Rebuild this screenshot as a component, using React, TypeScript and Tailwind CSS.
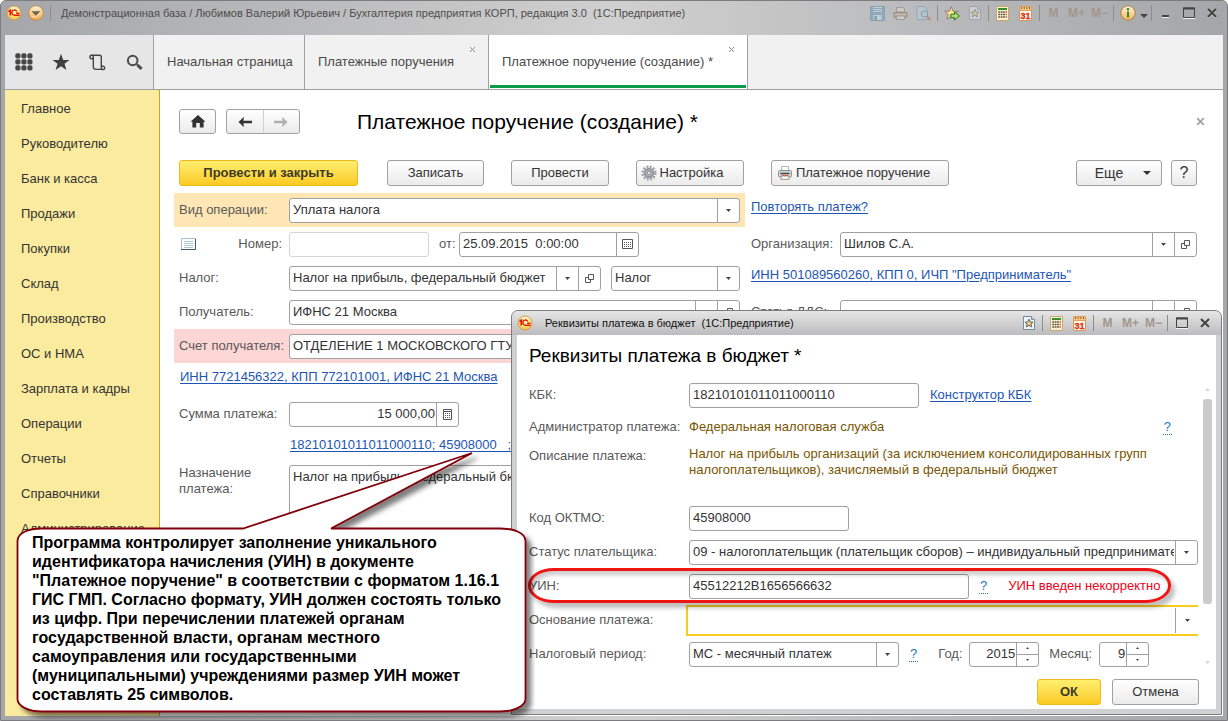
import { useState, type ReactNode } from 'react';

const sections = [
  'Главное',
  'Руководителю',
  'Банк и касса',
  'Продажи',
  'Покупки',
  'Склад',
  'Производство',
  'ОС и НМА',
  'Зарплата и кадры',
  'Операции',
  'Отчеты',
  'Справочники',
  'Администрирование',
];

/* ---------- icons ---------- */

function LogoIcon() {
  return (
    <svg width="16" height="16" viewBox="0 0 16 16" className="shrink-0" aria-hidden="true">
      <defs>
        <radialGradient id="logo" cx="0.5" cy="0.25" r="0.8">
          <stop offset="0" stopColor="#fffbd8" />
          <stop offset="0.55" stopColor="#ffe878" />
          <stop offset="1" stopColor="#f0b03a" />
        </radialGradient>
      </defs>
      <circle cx="8" cy="8" r="7" fill="url(#logo)" stroke="#c9924c" strokeWidth="0.8" />
      <path d="M2.4 6.6 4.3 5.2V10.6" fill="none" stroke="#e01a10" strokeWidth="1.7" />
      <path d="M10.8 6.5A2.6 2.6 0 1 0 8.6 10.2H13.6M10.2 8.3H13.4" fill="none" stroke="#e01a10" strokeWidth="1.4" />
    </svg>
  );
}

function MenuBallIcon() {
  return (
    <svg width="16" height="16" viewBox="0 0 16 16" aria-hidden="true">
      <defs>
        <linearGradient id="ball" x1="0" y1="0" x2="0" y2="1">
          <stop offset="0" stopColor="#fff0d4" />
          <stop offset="0.5" stopColor="#fbd08a" />
          <stop offset="1" stopColor="#f2a552" />
        </linearGradient>
      </defs>
      <circle cx="8" cy="8" r="7.3" fill="url(#ball)" stroke="#b9803f" strokeWidth="0.7" />
      <path d="M3.4 6.2H12.6L8 10.8Z" fill="#6a6259" />
      <path d="M3.4 11.2 8 11.8 12.6 6.8" fill="none" stroke="#fff" strokeWidth="0.5" />
    </svg>
  );
}

function SaveIcon() {
  return (
    <svg width="15" height="15" viewBox="0 0 15 15" aria-hidden="true">
      <path d="M0.5 0.5H14.5V14.5H0.5Z" fill="#8fa9bd" stroke="#86a0b4" />
      <path d="M3 1H12V6H3Z" fill="#c4ced5" />
      <path d="M3.5 9H11.5V14H3.5Z" fill="#c4ced5" />
      <path d="M3 2.5H12M3 4.5H12" stroke="#93a9ba" />
      <path d="M4.5 10H7V14H4.5Z" fill="#86a0b4" />
    </svg>
  );
}

function TitlePrintIcon() {
  return (
    <svg width="15" height="15" viewBox="0 0 15 15" aria-hidden="true">
      <path d="M3.5 1.5H10L11.5 3V6H3.5Z" fill="#c9c9c9" stroke="#a39a94" />
      <path d="M1 6.5H14V11.5H1Z" fill="#b8aca5" stroke="#9a8c84" />
      <path d="M2 8.5H13" stroke="#d0b5a4" />
      <path d="M3.5 10H11.5V13.5H3.5Z" fill="#cfcbc8" stroke="#a39a94" />
    </svg>
  );
}

function PreviewIcon() {
  return (
    <svg width="15" height="15" viewBox="0 0 15 15" aria-hidden="true">
      <path d="M1 0.5H8L11.5 4V13.5H1Z" fill="#b9c6cf" stroke="#93a9ba" />
      <circle cx="8.5" cy="8" r="3.2" fill="#b4c6d2" stroke="#8797a4" />
      <path d="M10.8 10.3 14.2 14" stroke="#b3907d" strokeWidth="2" />
    </svg>
  );
}

function AddFavIcon() {
  return (
    <svg width="16" height="15" viewBox="0 0 16 15" aria-hidden="true">
      <path d="M7.3 0.7 9.1 5.1 14.3 5.3 10.4 8.4 11.7 13.2 7.3 10.5 3 13.2 4.3 8.4 0.7 5.3 5.5 5.1Z" fill="#fcdc9a" stroke="#7a7260" strokeWidth="0.8" />
      <path d="M6.8 8.3H10.5V6L15.3 10 10.5 14V11.7H6.8Z" fill="#b4e06a" stroke="#287a1e" strokeWidth="1" />
    </svg>
  );
}

function FavPageIcon({ dim }: { dim?: boolean }) {
  return (
    <svg width="12" height="14" viewBox="0 0 12 14" className={dim ? 'opacity-40' : ''} aria-hidden="true">
      <path d="M0.5 0.5H8.5L11.5 3.5V13.5H0.5Z" fill="#eef4f8" stroke="#6f8ea6" />
      <path d="M8.5 0.5V3.5H11.5" fill="#c9dae6" stroke="#6f8ea6" />
      <path d="M6 3.2 7.2 5.9 10 6.2 7.9 8 8.6 10.9 6 9.3 3.4 10.9 4.1 8 2 6.2 4.8 5.9Z" fill="#f6cf86" stroke="#444" strokeWidth="0.8" />
    </svg>
  );
}

function CalcIcon() {
  return (
    <svg width="13" height="15" viewBox="0 0 13 15" aria-hidden="true">
      <path d="M0.5 0.5H12.5V14.5H0.5Z" fill="#fdf1cf" stroke="#c9a573" />
      <path d="M2 2H11V4H2Z" fill="#3a8f2a" />
      <path d="M2.300 6H4.100M4.700 6H6.500M7.100 6H8.900M2.300 8.500H4.100M4.700 8.500H6.500M7.100 8.500H8.900M2.300 11H4.100M4.700 11H6.500M7.100 11H8.900" stroke="#5a544a" strokeWidth="1.3" />
      <path d="M9.500 6H11M9.500 8.500H11M9.500 11H11" stroke="#d65a36" strokeWidth="1.3" />
    </svg>
  );
}

function CalendarIcon() {
  return (
    <svg width="13" height="15" viewBox="0 0 13 15" aria-hidden="true">
      <path d="M0.5 1.5H12.5V14.5H0.5Z" fill="#fff6e6" stroke="#cf9a62" />
      <path d="M0.5 0.5H12.5V4.5H0.5Z" fill="#f9c983" stroke="#d8a062" />
      <path d="M2.500 1V3M5.200 1V3M7.900 1V3M10.600 1V3" stroke="#8c5a2b" />
      <text x="6.5" y="13" textAnchor="middle" fontSize="9" fill="#e0301a" stroke="#e0301a" strokeWidth="0.3">31</text>
    </svg>
  );
}

function InfoIcon() {
  return (
    <svg width="16" height="16" viewBox="0 0 16 16" aria-hidden="true">
      <defs>
        <linearGradient id="info" x1="0" y1="0" x2="0" y2="1">
          <stop offset="0" stopColor="#fff3da" />
          <stop offset="1" stopColor="#f8b45c" />
        </linearGradient>
      </defs>
      <circle cx="8" cy="8" r="7.2" fill="url(#info)" stroke="#a9793b" strokeWidth="0.9" />
      <circle cx="8" cy="4.2" r="1.3" fill="#3a8a2a" />
      <path d="M8 6.5V12.4" stroke="#3a8a2a" strokeWidth="2" />
    </svg>
  );
}

function MaximizeIcon() {
  return (
    <svg width="12" height="12" viewBox="0 0 12 12" aria-hidden="true">
      <path d="M0.5 1H11.5V10.5H0.5Z" fill="none" stroke="#444" />
      <path d="M0 1.5H12" stroke="#444" strokeWidth="2" />
      <path d="M0 11.5H12" stroke="#f2f2f2" />
    </svg>
  );
}

function CloseIcon() {
  return (
    <svg width="10" height="10" viewBox="0 0 10 10" aria-hidden="true">
      <path d="M1 2 9 10M9 2 1 10" stroke="#eee" strokeWidth="1.6" />
      <path d="M1 1 9 9M9 1 1 9" stroke="#454545" strokeWidth="2.2" />
    </svg>
  );
}

function CrossIcon() {
  return (
    <svg width="7" height="7" viewBox="0 0 7 7" aria-hidden="true">
      <path d="M1 1 6 6M6 1 1 6" stroke="#8c8c8c" />
    </svg>
  );
}

function FormCrossIcon() {
  return (
    <svg width="9" height="9" viewBox="0 0 9 9" aria-hidden="true">
      <path d="M1.2 1.2 7.8 7.8M7.800 1.2 1.2 7.800" stroke="#a5a5a5" strokeWidth="1.9" />
    </svg>
  );
}

function AppsIcon() {
  return (
    <svg width="18" height="18" viewBox="0 0 18 18" fill="#474747" aria-hidden="true">
      {[0, 6, 12].map(y => [0, 6, 12].map(x => <rect key={`${x}-${y}`} x={x + 0.3} y={y + 0.3} width="5.2" height="5.2" rx="1.8" />))}
    </svg>
  );
}

function StarIcon() {
  return (
    <svg width="18" height="18" viewBox="0 0 18 18" fill="#404040" aria-hidden="true">
      <path d="M9 0.8 11.2 6.9 17.5 7 12.5 10.8 14.4 17 9 13.3 3.6 17 5.5 10.8 0.5 7 6.8 6.9Z" />
    </svg>
  );
}

function ScrollIcon() {
  return (
    <svg width="17" height="17" viewBox="0 0 17 17" fill="none" stroke="#454545" strokeWidth="1.4" aria-hidden="true">
      <path d="M4.300 4.700H2.600A1.700 1.700 0 1 1 4.300 3V12.800A2.600 2.600 0 0 0 6.900 15.400H14" />
      <path d="M2.600 1.300H10.300A2 2 0 0 1 12.300 3.300V13.800A1.700 1.700 0 1 0 14 12.200H12.300" />
    </svg>
  );
}

function SearchIcon() {
  return (
    <svg width="17" height="17" viewBox="0 0 17 17" fill="none" stroke="#4c4c4c" aria-hidden="true">
      <circle cx="6.7" cy="6.5" r="4.800" strokeWidth="2" />
      <path d="M10.2 10 12 11.6" strokeWidth="1.6" />
      <path d="M11.6 11.2 15.6 14.9" strokeWidth="3" />
    </svg>
  );
}

function HomeIcon() {
  return (
    <svg width="16" height="13" viewBox="0 0 16 13" fill="#333" aria-hidden="true">
      <path d="M8 0 15.5 6.8H13.6V12.5H9.8V8H6.2V12.5H2.4V6.8H0.5Z" />
    </svg>
  );
}

function ArrowIcon({ right }: { right?: boolean }) {
  return (
    <svg width="14" height="12" viewBox="0 0 14 12" aria-hidden="true">
      {right ? (
        <path d="M13.5 6 8 0.8 8.6 4.7H0V7.3H8.6L8 11.2Z" fill="#b0b0b0" />
      ) : (
        <path d="M0.5 6 6 0.8 5.4 4.7H14V7.3H5.4L6 11.2Z" fill="#333" />
      )}
    </svg>
  );
}

function GearIcon() {
  return (
    <svg width="16" height="16" viewBox="0 0 16 16" aria-hidden="true">
      <circle cx="8" cy="8" r="6.400" fill="none" stroke="#9a9fa5" strokeWidth="2.4" strokeDasharray="1.9 1.45" />
      <circle cx="8" cy="8" r="4" fill="#c4c7cb" stroke="#9297a0" strokeWidth="2.4" />
      <circle cx="8" cy="8" r="1.700" fill="#e4e5e6" stroke="#777" strokeWidth="0.7" />
    </svg>
  );
}

function PrinterIcon() {
  return (
    <svg width="14" height="14" viewBox="0 0 14 14" aria-hidden="true">
      <path d="M3.5 0.5H10.5V5H3.500Z" fill="#fff" stroke="#b5b5b5" />
      <rect x="0.5" y="4.5" width="13" height="6.5" rx="1.2" fill="#d2d3d5" stroke="#8f9193" />
      <path d="M2.500 7.500H11.500" stroke="#44474a" strokeWidth="1.600" />
      <path d="M3 10H11V13.3H3Z" fill="#fff" stroke="#a58f7d" />
      <path d="M4 9.500H10" stroke="#d4623a" />
    </svg>
  );
}

function ListIcon() {
  return (
    <svg width="15" height="12" viewBox="0 0 15 12" aria-hidden="true">
      <path d="M0.5 0.5H14.5V11.5H0.5Z" fill="#fff" stroke="#a9bfd0" />
      <path d="M14.5 1V11.5H0" fill="none" stroke="#3e5a66" />
      <path d="M3 3.5H12M3 5.5H12M3 7.5H12M3 9.5H12" stroke="#9db6c8" strokeWidth="0.8" />
    </svg>
  );
}

function DownIcon() {
  return (
    <svg width="5" height="3" viewBox="0 0 5 3" aria-hidden="true">
      <path d="M0 0H5L2.5 3Z" fill="#444" />
    </svg>
  );
}

function OpenIcon() {
  return (
    <svg width="9" height="9" viewBox="0 0 9 9" fill="none" stroke="#555" aria-hidden="true">
      <path d="M3.5 0.5H8.5V5.5H3.5Z" />
      <path d="M3 3.5H0.5V8.5H5.5V6" />
    </svg>
  );
}

function DateIcon() {
  return (
    <svg width="11" height="10" viewBox="0 0 11 10" aria-hidden="true">
      <path d="M0.5 0.5H10.5V9.5H0.5Z" fill="none" stroke="#555" />
      <path d="M2 3.5H9M2 5.5H9M2 7.5H9" stroke="#555" strokeDasharray="1 1" />
    </svg>
  );
}

function SmallCalcIcon() {
  return (
    <svg width="9" height="11" viewBox="0 0 9 11" aria-hidden="true">
      <path d="M0.5 0.5H8.5V10.5H0.5ZM0.5 2.5H8.5" fill="none" stroke="#555" />
      <path d="M2 4.5H7.500M2 6.5H7.500M2 8.500H7.500" stroke="#555" strokeDasharray="1 1" />
    </svg>
  );
}

/* ---------- title bar parts ---------- */

function Slot({ label, children }: { label: string; children: ReactNode }) {
  return (
    <button type="button" aria-label={label} className="flex w-[23px] shrink-0 items-center justify-center text-[12px] font-bold text-[#a3968e]">
      {children}
    </button>
  );
}

function Sep() {
  return (
    <div className="flex w-[5px] shrink-0 justify-center">
      <div className="h-4 w-px bg-[#8d8d8d]" />
    </div>
  );
}

function MemoryButtons() {
  return (
    <>
      <Slot label="Память M">M</Slot>
      <Slot label="Память M+">M+</Slot>
      <Slot label="Память M-">M−</Slot>
    </>
  );
}

/* ---------- form parts ---------- */

function CellButton({ label, children }: { label: string; children: ReactNode }) {
  return (
    <button type="button" aria-label={label} className="flex w-[22px] shrink-0 items-center justify-center border-l border-[#a0a0a0]">
      {children}
    </button>
  );
}

const box = 'flex h-[25px] overflow-hidden rounded-[3px] border border-[#a0a0a0] bg-white';
const inner = 'min-w-0 flex-1 bg-transparent pr-px pl-[3px] text-[#333] outline-none';

interface FieldProps {
  id: string;
  value: string;
  width: string;
  right?: boolean;
  children?: ReactNode;
}

function TextField({ id, value, width, right, children }: FieldProps) {
  const [text, setText] = useState(value);
  return (
    <div className={`${box} ${width}`}>
      <input id={id} value={text} onChange={e => setText(e.target.value)} className={`${inner} ${right ? 'text-right' : ''}`} />
      {children}
    </div>
  );
}

function SelectField({ id, value, width, children }: FieldProps) {
  return (
    <div className={`${box} ${width}`}>
      <select id={id} defaultValue={value} className={`${inner} appearance-none`}>
        <option>{value}</option>
      </select>
      <span className="flex w-[22px] shrink-0 items-center justify-center border-l border-[#a0a0a0]">
        <DownIcon />
      </span>
      {children}
    </div>
  );
}

function Stepper({ id, value, width }: FieldProps) {
  const [num, setNum] = useState(Number(value));
  return (
    <div className={`${box} ${width}`}>
      <input id={id} value={num} onChange={e => setNum(Number(e.target.value) || 0)} className={`${inner} text-right`} />
      <div className="flex w-[22px] shrink-0 flex-col border-l border-[#a0a0a0]">
        <button type="button" aria-label="Больше" onClick={() => setNum(num + 1)} className="flex flex-1 items-center justify-center border-b border-[#a0a0a0]">
          <svg width="3" height="2" viewBox="0 0 3 2"><path d="M0 2H3L1.5 0Z" fill="#444" /></svg>
        </button>
        <button type="button" aria-label="Меньше" onClick={() => setNum(num - 1)} className="flex flex-1 items-center justify-center">
          <svg width="3" height="2" viewBox="0 0 3 2"><path d="M0 0H3L1.5 2Z" fill="#444" /></svg>
        </button>
      </div>
    </div>
  );
}

function Button({ width, children }: { width: string; children: ReactNode }) {
  return (
    <button type="button" className={`flex h-[26px] shrink-0 items-center justify-center rounded-[3px] border border-[#a0a0a0] bg-linear-to-b from-white to-[#ebebeb] text-[#333] ${width}`}>
      {children}
    </button>
  );
}

function YellowButton({ width, children }: { width: string; children: ReactNode }) {
  return (
    <button type="button" className={`h-[26px] shrink-0 rounded-[3px] border border-[#edb91b] bg-linear-to-b from-[#ffef6e] to-[#fbca1c] font-bold text-[#3f3a26] ${width}`}>
      {children}
    </button>
  );
}

function Link({ children }: { children: ReactNode }) {
  return <a href="#" className="whitespace-pre text-[#1d55b5] underline underline-offset-2">{children}</a>;
}

function Help() {
  return <a href="#" aria-label="Справка" className="border-b border-dotted border-[#1c78b8] px-px leading-[14px] text-[#1c78b8]">?</a>;
}

function Label({ htmlFor, width, children }: { htmlFor?: string; width: string; children: ReactNode }) {
  return <label htmlFor={htmlFor} className={`shrink-0 text-[#595959] ${width}`}>{children}</label>;
}

/* ---------- page parts ---------- */

function TitleBar() {
  return (
    <header className="flex h-[34px] shrink-0 items-start pt-[2px]">
      <div className="flex h-5 min-w-0 flex-1 items-center">
        <div className="flex w-[18px] shrink-0 justify-center"><LogoIcon /></div>
        <button type="button" aria-label="Главное меню" className="ml-[5px]"><MenuBallIcon /></button>
        <div className="ml-[6px] h-4 w-px bg-[#8d8d8d]" />
        <h1 className="ml-[10px] truncate text-[11px] text-[#4d4d4d]">
          Демонстрационная база / Любимов Валерий Юрьевич / Бухгалтерия предприятия КОРП, редакция 3.0&nbsp; (1С:Предприятие)
        </h1>
      </div>
      <div className="flex h-5 items-center">
        <Slot label="Сохранить"><SaveIcon /></Slot>
        <Slot label="Печать"><TitlePrintIcon /></Slot>
        <Slot label="Просмотр"><PreviewIcon /></Slot>
        <Sep />
        <Slot label="Добавить в избранное"><AddFavIcon /></Slot>
        <Slot label="Избранное"><FavPageIcon dim /></Slot>
        <Sep />
        <Slot label="Калькулятор"><CalcIcon /></Slot>
        <Slot label="Календарь"><CalendarIcon /></Slot>
        <Sep />
        <MemoryButtons />
        <Sep />
        <Slot label="О программе"><InfoIcon /></Slot>
        <button type="button" aria-label="Еще команды" className="flex w-[10px] items-center justify-center pt-1.5">
          <svg width="8" height="4" viewBox="0 0 8 4"><path d="M0 0H8L4 4Z" fill="#444" /></svg>
        </button>
        <Sep />
        <Slot label="Свернуть"><span className="mt-1.5 h-[3px] w-[7px] border-b border-[#eee] bg-[#444]" /></Slot>
        <Slot label="Развернуть"><MaximizeIcon /></Slot>
        <Slot label="Закрыть"><CloseIcon /></Slot>
      </div>
    </header>
  );
}

function TabBar() {
  return (
    <nav className="flex h-[55px] shrink-0 border-b border-[#a0a0a0] bg-[#f1f1f1] text-[#4a4a4a]">
      <div className="flex w-[149px] border-r border-[#a0a0a0] bg-[#e6e6e6]">
        <button type="button" aria-label="Разделы" className="flex w-[37px] items-center justify-center"><AppsIcon /></button>
        <button type="button" aria-label="Избранное" className="flex w-[37px] items-center justify-center"><StarIcon /></button>
        <button type="button" aria-label="История" className="flex w-[37px] items-center justify-center"><ScrollIcon /></button>
        <button type="button" aria-label="Поиск" className="flex w-[37px] items-center justify-center"><SearchIcon /></button>
      </div>
      <a href="#" className="flex w-[151px] items-center border-r border-[#a0a0a0] pl-[13px]">Начальная страница</a>
      <div className="relative flex w-[184px] items-center border-r border-[#a0a0a0] pl-[13px]">
        <a href="#">Платежные поручения</a>
        <button type="button" aria-label="Закрыть вкладку" className="absolute top-[11px] right-3"><CrossIcon /></button>
      </div>
      <div className="relative flex w-[259px] items-center border-r border-[#a0a0a0] bg-white pl-[13px]">
        <a href="#" aria-current="page">Платежное поручение (создание) *</a>
        <button type="button" aria-label="Закрыть вкладку" className="absolute top-[11px] right-3"><CrossIcon /></button>
        <div className="absolute inset-x-px bottom-px h-[3px] bg-[#0b9a47]" />
      </div>
    </nav>
  );
}

function Toolbar() {
  return (
    <div className="flex items-center">
      <YellowButton width="w-[179px]">Провести и закрыть</YellowButton>
      <div className="ml-[29px] flex flex-1 gap-[27px]">
        <Button width="w-[97px]">Записать</Button>
        <Button width="w-[98px]">Провести</Button>
        <Button width="w-[108px]"><GearIcon /><span className="mr-4 ml-[3px]">Настройка</span></Button>
        <Button width="w-[178px]"><PrinterIcon /><span className="mr-3 ml-1">Платежное поручение</span></Button>
      </div>
      <Button width="w-[86px]">
        <span className="mr-5 ml-2 text-[14px]">Еще</span>
        <svg width="8" height="4" viewBox="0 0 8 4" aria-hidden="true"><path d="M0 0H8L4 4Z" fill="#333" /></svg>
      </Button>
      <div className="ml-[9px]"><Button width="w-[26px]"><span className="text-[16px]">?</span></Button></div>
    </div>
  );
}

function PaymentForm() {
  return (
    <div className="flex gap-[6px]">
      <div className="w-[571px] shrink-0">
        <div className="flex h-[34px] items-center bg-[#ffe7b5] pl-[5px]">
          <Label htmlFor="kind" width="w-[110px]">Вид операции:</Label>
          <SelectField id="kind" value="Уплата налога" width="w-[451px]" />
        </div>
        <div className="flex h-[34px] items-center pl-[7px]">
          <ListIcon />
          <Label htmlFor="number" width="w-[93px] pr-[7px] text-right">Номер:</Label>
          <input id="number" disabled className="h-[25px] w-[140px] rounded-[3px] border border-[#d4d4d4] bg-white" />
          <Label htmlFor="date" width="w-[30px] pl-[10px]">от:</Label>
          <TextField id="date" value="25.09.2015  0:00:00" width="w-[180px]">
            <CellButton label="Выбрать дату"><DateIcon /></CellButton>
          </TextField>
        </div>
        <div className="flex h-[34px] items-center pl-[5px]">
          <Label htmlFor="tax" width="w-[110px]">Налог:</Label>
          <SelectField id="tax" value="Налог на прибыль, федеральный бюджет" width="w-[312px]">
            <CellButton label="Открыть налог"><OpenIcon /></CellButton>
          </SelectField>
          <div className="ml-[10px]">
            <SelectField id="taxKind" value="Налог" width="w-[129px]" />
          </div>
        </div>
        <div className="flex h-[34px] items-center pl-[5px]">
          <Label htmlFor="payee" width="w-[110px]">Получатель:</Label>
          <SelectField id="payee" value="ИФНС 21 Москва" width="w-[451px]">
            <CellButton label="Открыть получателя"><OpenIcon /></CellButton>
          </SelectField>
        </div>
        <div className="flex h-[34px] items-center bg-[#fcd5d5] pl-[5px]">
          <Label htmlFor="account" width="w-[110px]">Счет получателя:</Label>
          <SelectField id="account" value="ОТДЕЛЕНИЕ 1 МОСКОВСКОГО ГТУ" width="w-[451px]">
            <CellButton label="Открыть счет"><OpenIcon /></CellButton>
          </SelectField>
        </div>
        <div className="h-[34px] pt-1 pl-[6px]"><Link>ИНН 7721456322, КПП 772101001, ИФНС 21 Москва</Link></div>
        <div className="flex h-[34px] items-center pl-[5px]">
          <Label htmlFor="sum" width="w-[110px]">Сумма платежа:</Label>
          <TextField id="sum" value="15 000,00" width="w-[170px]" right>
            <CellButton label="Калькулятор"><SmallCalcIcon /></CellButton>
          </TextField>
        </div>
        <div className="h-[34px] pt-1 pl-[116px]"><Link>{'18210101011011000110; 45908000   ;  '}</Link></div>
        <div className="flex pl-[5px]">
          <Label htmlFor="purpose" width="w-[110px] leading-4">Назначение<br />платежа:</Label>
          <textarea id="purpose" rows={5} defaultValue="Налог на прибыль, федеральный бюджет" className="w-[451px] resize-none rounded-[3px] border border-[#a0a0a0] bg-white px-[3px] py-px text-[#333]" />
        </div>
      </div>
      <div className="min-w-0 flex-1">
        <div className="h-[34px] pt-1"><Link>Повторять платеж?</Link></div>
        <div className="flex h-[34px] items-center">
          <Label htmlFor="org" width="w-[89px]">Организация:</Label>
          <SelectField id="org" value="Шилов С.А." width="min-w-0 flex-1">
            <CellButton label="Открыть организацию"><OpenIcon /></CellButton>
          </SelectField>
        </div>
        <div className="h-[34px] pt-1"><Link>ИНН 501089560260, КПП 0, ИЧП "Предприниматель"</Link></div>
        <div className="flex h-[34px] items-center">
          <Label htmlFor="flow" width="w-[89px]">Статья ДДС:</Label>
          <SelectField id="flow" value="" width="min-w-0 flex-1">
            <CellButton label="Открыть статью"><OpenIcon /></CellButton>
          </SelectField>
        </div>
      </div>
    </div>
  );
}

function BudgetDialog() {
  return (
    <section role="dialog" aria-labelledby="dialogTitle" className="absolute top-[309px] right-[5px] bottom-[5px] left-[510px] flex flex-col overflow-hidden rounded-t-[7px] border border-[#7d7d7d] bg-[#cfd0d2]">
      <div className="flex h-6 shrink-0 items-center bg-linear-to-b from-[#e6e6e6] to-[#bcbcbe] px-[5px]">
        <LogoIcon />
        <h2 className="ml-3 flex-1 truncate text-[11px] text-[#111]">Реквизиты платежа в бюджет&nbsp; (1С:Предприятие)</h2>
        <Slot label="Избранное"><FavPageIcon /></Slot>
        <Sep />
        <Slot label="Калькулятор"><CalcIcon /></Slot>
        <Slot label="Календарь"><CalendarIcon /></Slot>
        <Sep />
        <MemoryButtons />
        <Sep />
        <Slot label="Развернуть"><MaximizeIcon /></Slot>
        <Slot label="Закрыть"><CloseIcon /></Slot>
      </div>
      <div className="mx-[5px] mb-[5px] flex min-h-0 flex-1 flex-col bg-white">
        <h2 id="dialogTitle" className="pt-[7px] pl-3 text-[19px] leading-[27px] text-black">Реквизиты платежа в бюджет *</h2>
        <div className="flex min-h-0 flex-1 pt-[9px] pl-3">
          <div className="min-w-0 flex-1">
            <div className="flex h-[34px] items-center">
              <Label htmlFor="kbk" width="w-[160px]">КБК:</Label>
              <TextField id="kbk" value="18210101011011000110" width="w-[230px]" />
              <div className="ml-[11px]"><Link>Конструктор КБК</Link></div>
            </div>
            <div className="flex h-[29px] items-center text-[#7a5500]">
              <span className="w-[160px] text-[#595959]">Администратор платежа:</span>
              <span className="flex-1">Федеральная налоговая служба</span>
              <div className="mr-[26px]"><Help /></div>
            </div>
            <div className="flex h-[60px] pt-[5px] leading-4 text-[#7a5500]">
              <span className="w-[160px] shrink-0 pt-[2px] text-[#595959]">Описание платежа:</span>
              <p className="w-[480px]">Налог на прибыль организаций (за исключением консолидированных групп налогоплательщиков), зачисляемый в федеральный бюджет</p>
            </div>
            <div className="flex h-[34px] items-center">
              <Label htmlFor="oktmo" width="w-[160px]">Код ОКТМО:</Label>
              <TextField id="oktmo" value="45908000" width="w-[160px]" />
            </div>
            <div className="flex h-[34px] items-center">
              <Label htmlFor="status" width="w-[160px]">Статус плательщика:</Label>
              <SelectField id="status" value="09 - налогоплательщик (плательщик сборов) – индивидуальный предприниматель" width="min-w-0 flex-1" />
            </div>
            <div className="relative flex h-[34px] items-center">
              <Label htmlFor="uin" width="w-[160px]">УИН:</Label>
              <TextField id="uin" value="45512212B1656566632" width="w-[280px]" />
              <div className="ml-[10px]"><Help /></div>
              <span className="ml-5 text-[#f00018]">УИН введен некорректно</span>
              <div className="pointer-events-none absolute -top-px right-[27px] -left-px h-[35px] rounded-[26px/17px] border-[3px] border-[#f01414] shadow-[4px_5px_4px_rgba(0,0,0,0.25),inset_3px_4px_4px_rgba(0,0,0,0.2)]" />
            </div>
            <div className="flex h-[34px] items-center">
              <Label htmlFor="basis" width="w-[157px]">Основание платежа:</Label>
              <div className="flex h-[31px] min-w-0 flex-1 border-2 border-r-0 border-[#f9cb1f] py-px">
                <select id="basis" className={`${inner} appearance-none`}><option /></select>
                <span className="flex w-[23px] items-center justify-center border-l border-[#a0a0a0]"><DownIcon /></span>
              </div>
            </div>
            <div className="flex h-[34px] items-center">
              <Label htmlFor="period" width="w-[160px]">Налоговый период:</Label>
              <SelectField id="period" value="МС - месячный платеж" width="w-[210px]" />
              <div className="ml-[10px]"><Help /></div>
              <Label htmlFor="year" width="ml-5 w-[31px]">Год:</Label>
              <Stepper id="year" value="2015" width="w-[70px]" />
              <Label htmlFor="month" width="ml-[10px] w-[50px]">Месяц:</Label>
              <Stepper id="month" value="9" width="w-[50px]" />
            </div>
          </div>
          <div className="flex w-[18px] shrink-0 flex-col items-center pt-[10px] pb-[9px]">
            <svg width="5" height="3" viewBox="0 0 5 3" aria-hidden="true"><path d="M0 3H5L2.5 0Z" fill="#d5d5d5" /></svg>
            <div className="mt-2 h-[205px] w-[9px] rounded-[3px] bg-[#cbcbcb]" />
            <svg width="5" height="3" viewBox="0 0 5 3" className="mt-auto" aria-hidden="true"><path d="M0 0H5L2.5 3Z" fill="#d5d5d5" /></svg>
          </div>
        </div>
        <div className="flex justify-end gap-[11px] pt-1.5 pr-[17px] pb-1">
          <YellowButton width="w-[64px]">ОК</YellowButton>
          <Button width="w-[87px]">Отмена</Button>
        </div>
      </div>
    </section>
  );
}

function Callout() {
  return (
    <aside className="absolute top-[449px] left-[14px] w-[520px]">
      <svg width="520" height="271" viewBox="15 450 520 271" className="absolute inset-0" aria-hidden="true">
        <defs>
          <filter id="shade" x="-5%" y="-5%" width="110%" height="115%">
            <feDropShadow dx="5" dy="5" stdDeviation="2.5" floodColor="#000" floodOpacity="0.5" />
          </filter>
        </defs>
        <path
          d="M42 528.5H243L472 453 331 528.5H500C514 528.5 525.5 533 525.5 541V699C525.5 706 514 711.500 500 711.500H42C28 711.500 17.500 706 17.500 699V541C17.500 533 28 528.500 42 528.500Z"
          fill="#fff"
          stroke="#800008"
          strokeWidth="1.8"
          filter="url(#shade)"
        />
      </svg>
      <p className="relative pt-[83px] pl-[17px] text-[16px] leading-[19px] font-bold whitespace-nowrap text-black">
        Программа контролирует заполнение уникального<br />
        идентификатора начисления (УИН) в документе<br />
        "Платежное поручение" в соответствии с форматом 1.16.1<br />
        ГИС ГМП. Согласно формату, УИН должен состоять только<br />
        из цифр. При перечислении платежей органам<br />
        государственной власти, органам местного<br />
        самоуправления или государственными<br />
        (муниципальными) учреждениями размер УИН может<br />
        составлять 25 символов.
      </p>
    </aside>
  );
}

export default function App() {
  return (
    <div className="relative flex h-screen flex-col overflow-hidden rounded-t-[6px] border border-[#7c7c7e] bg-linear-to-r from-[#a5a6a9] via-[#d0d0d0] to-[#a5a6a9] px-1 pb-1 font-['Liberation_Sans',Arial,sans-serif] text-[13px] leading-5">
      <TitleBar />
      <TabBar />
      <div className="flex min-h-0 flex-1 bg-white">
        <ul className="w-[155px] shrink-0 overflow-hidden border-r border-[#c9a61f] bg-[#fbeb9e] pt-px text-[#333]">
          {sections.map(name => (
            <li key={name} className="flex h-[35px] items-center pl-4">
              <a href="#">{name}</a>
            </li>
          ))}
        </ul>
        <main className="min-w-0 flex-1 overflow-hidden pt-[19px] pr-[26px] pl-[14px]">
          <div className="flex items-center pl-[5px]">
            <button type="button" aria-label="Домой" className="flex h-[25px] w-[37px] items-center justify-center rounded-[3px] border border-[#a0a0a0] bg-linear-to-b from-white to-[#ebebeb]"><HomeIcon /></button>
            <div className="ml-[10px] flex h-[25px] w-[74px] rounded-[3px] border border-[#a0a0a0] bg-linear-to-b from-white to-[#ebebeb]">
              <button type="button" aria-label="Назад" className="flex flex-1 items-center justify-center border-r border-[#d0d0d0]"><ArrowIcon /></button>
              <button type="button" aria-label="Вперед" className="flex flex-1 items-center justify-center"><ArrowIcon right /></button>
            </div>
            <h2 className="ml-[57px] flex-1 text-[21px] leading-[25px] text-black">Платежное поручение (создание) *</h2>
            <button type="button" aria-label="Закрыть форму" className="-mr-2"><FormCrossIcon /></button>
          </div>
          <div className="pt-[26px] pl-[5px]"><Toolbar /></div>
          <div className="pt-[7px]"><PaymentForm /></div>
        </main>
      </div>
      <BudgetDialog />
      <Callout />
    </div>
  );
}
